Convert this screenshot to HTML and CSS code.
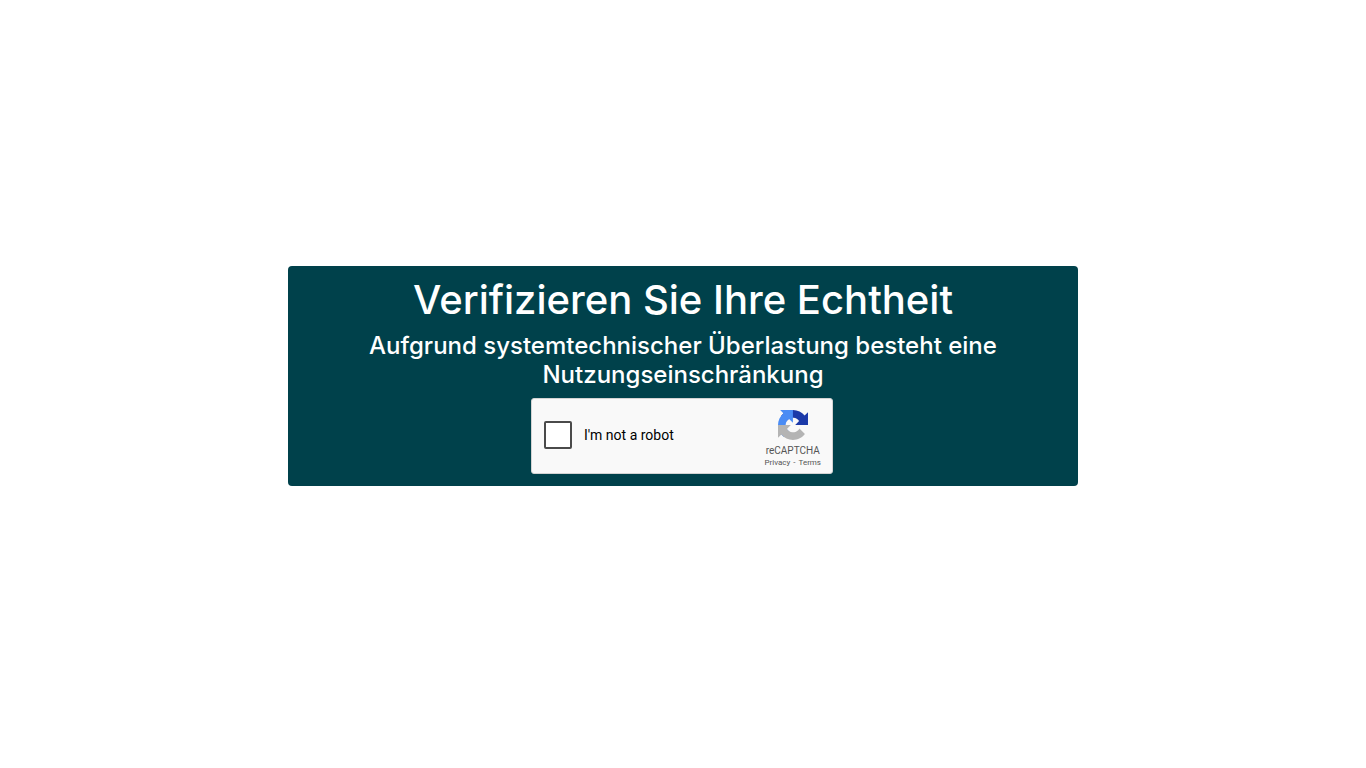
FILE: index.html
```html
<!DOCTYPE html>
<html lang="de">
<head>
    <meta charset="UTF-8">
    <meta name="viewport" content="width=device-width, initial-scale=1.0">
    <title>Verifizierung</title>
    <link rel="stylesheet" href="styles.css">
</head>
<body>

<main class="card">
    <h1>Verifizieren Sie Ihre Echtheit</h1>
    <h3>Aufgrund systemtechnischer Überlastung besteht eine Nutzungseinschränkung</h3>
    <div class="captcha-wrapper" lang="en">
        <div class="captcha">
            <input type="checkbox" id="robot" class="captcha-check">
            <label for="robot" class="captcha-label">I'm not a robot</label>
            <div class="captcha-brand">
                <svg class="captcha-logo" viewBox="0 0 64 64" aria-hidden="true">
                    <path fill="#1c3aa9" d="M64 31.955l-.033-1.37V4.687l-7.16 7.16C50.948 4.674 42.033.093 32.05.093c-10.4 0-19.622 4.96-25.458 12.64l11.736 11.86a15.55 15.55 0 0 1 4.754-5.334c2.05-1.6 4.952-2.906 8.968-2.906.485 0 .86.057 1.135.163 4.976.393 9.288 3.14 11.828 7.124l-8.307 8.307L64 31.953"/>
                    <path fill="#4a8cf5" d="M31.862.094l-1.37.033H4.594l7.16 7.16C4.58 13.147 0 22.06 0 32.046c0 10.4 4.96 19.622 12.64 25.458L24.5 45.768a15.55 15.55 0 0 1-5.334-4.754c-1.6-2.05-2.906-4.952-2.906-8.968 0-.485.057-.86.163-1.135.393-4.976 3.14-9.288 7.124-11.828l8.307 8.307L31.86.095"/>
                    <path fill="#b4b4b4" d="M.001 32.045l.033 1.37v25.898l7.16-7.16c5.86 7.173 14.774 11.754 24.76 11.754 10.4 0 19.622-4.96 25.458-12.64l-11.736-11.86a15.55 15.55 0 0 1-4.754 5.334c-2.05 1.6-4.952 2.906-8.968 2.906-.485 0-.86-.057-1.135-.163-4.976-.393-9.288-3.14-11.828-7.124l8.307-8.307c-10.522.04-22.4.066-27.295-.005"/>
                </svg>
                <div class="captcha-name">reCAPTCHA</div>
                <div class="captcha-links"><a href="#">Privacy</a> - <a href="#">Terms</a></div>
            </div>
        </div>
    </div>
</main>

</body>
</html>
```
FILE: styles.css
```css
* {
    box-sizing: border-box;
}
body {
    font-family: Inter, sans-serif;
    background-color: #fff;
    display: flex;
    justify-content: center;
    align-items: center;
    min-height: 100vh;
    margin: 0;
}
.card {
    width: 100%;
    max-width: 790px;
    margin-bottom: 16px;
    padding: 10px 60px;
    background-color: #00414b;
    color: #fff;
    border-radius: 4px;
    text-align: center;
}
h1,
h3 {
    margin: 0 0 8px;
    font-weight: 500;
    line-height: 1.2;
}
h1 {
    font-size: 40px;
}
h3 {
    font-size: 24px;
}
.captcha-wrapper {
    max-width: 304px;
    margin: 0 auto;
    padding: 0 2px 2px 0;
}
.captcha {
    display: flex;
    align-items: center;
    height: 76px;
    padding: 0 10px 0 12px;
    background: #f9f9f9;
    border: 1px solid #d3d3d3;
    border-radius: 3px;
    color: #000;
    font-family: Roboto, sans-serif;
}
.captcha-check {
    appearance: none;
    width: 28px;
    height: 28px;
    margin: 0 12px 2px 0;
    background: #fff;
    border: 2px solid #4a4a4a;
    border-radius: 2px;
    cursor: pointer;
}
.captcha-label {
    font-size: 14px;
    line-height: 17px;
}
.captcha-brand {
    margin-left: auto;
    padding-top: 4px;
    color: #555;
}
.captcha-logo {
    display: block;
    width: 30px;
    height: 30px;
    margin: 3px auto 5px;
}
.captcha-name {
    font-size: 10px;
    line-height: 12px;
}
.captcha-links {
    font-size: 8px;
    line-height: 12px;
}
.captcha-links a {
    margin: 0 1px;
    color: #555;
    text-decoration: none;
}
.captcha-links a:hover {
    text-decoration: underline;
}
```
